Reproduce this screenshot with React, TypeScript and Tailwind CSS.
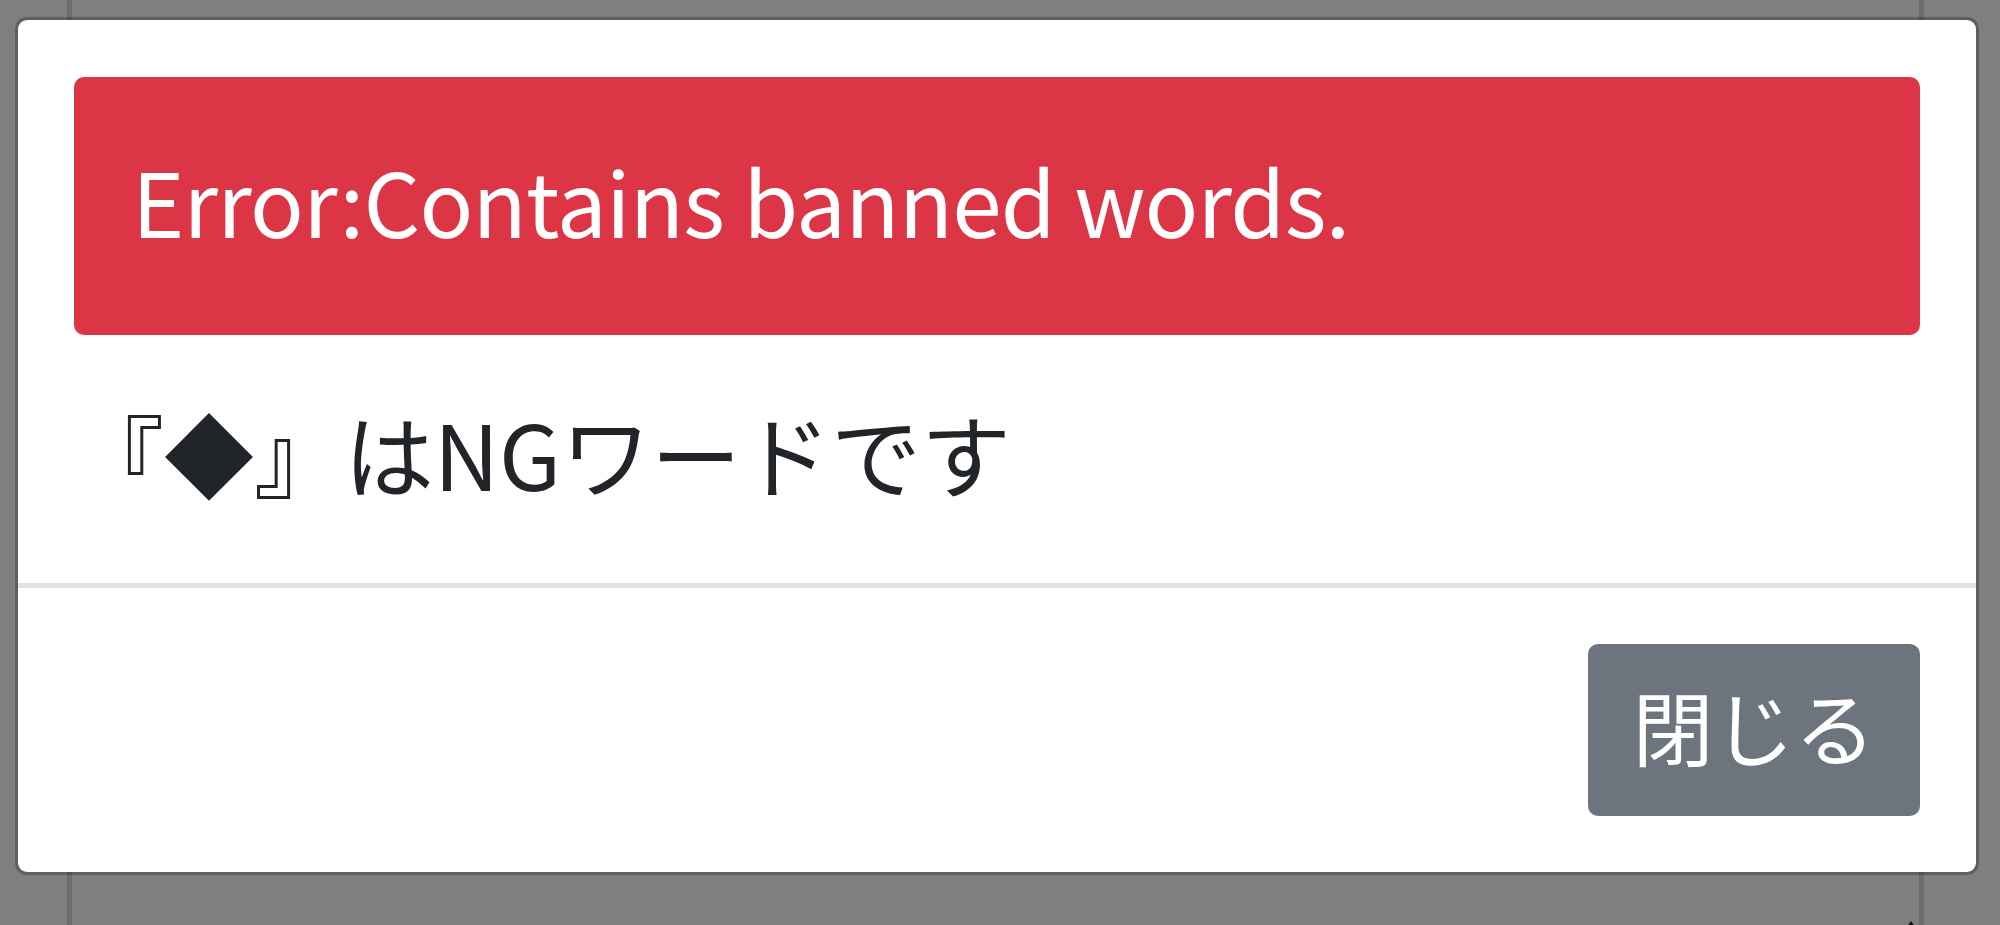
export default function App() {
  return (
    <div className="relative h-[925px] w-[2000px] overflow-hidden bg-white font-['Noto_Sans_CJK_JP','Noto_Sans',sans-serif]">
      {/* page behind the overlay */}
      <div className="ml-[67px] h-full w-[1857px] border-x-[5px] border-[#d4dce6]" />
      <div className="absolute bottom-[-6px] left-[1904px] h-0 w-0 border-x-[7px] border-b-[10px] border-x-transparent border-b-[#222]" />

      {/* overlay */}
      <div className="absolute inset-0 bg-black/50">
        <div className="ml-[15px] mt-[17px] w-[1964px] rounded-[12px] border-[3px] border-black/25 bg-white bg-clip-padding">
          <div className="px-[56px] pb-[63px] pt-[57px]">
            <div className="flex h-[258px] items-center rounded-[10px] bg-[#dc3545] px-[58px] pb-[14px] text-[89px] leading-none tracking-[-0.8px] text-white">
              Error:Contains banned words.
            </div>
            <p className="mt-[50px] text-[90px] leading-[1.5] text-[#212529]">『◆』はNGワードです</p>
          </div>
          <div className="flex justify-end border-t-[5px] border-[#dee2e6] px-[56px] py-[56px]">
            <button className="flex h-[172px] w-[332px] items-center justify-center rounded-[10px] bg-[#6c757d] pb-[12px] text-[81px] leading-none text-white">
              閉じる
            </button>
          </div>
        </div>
      </div>
    </div>
  )
}
